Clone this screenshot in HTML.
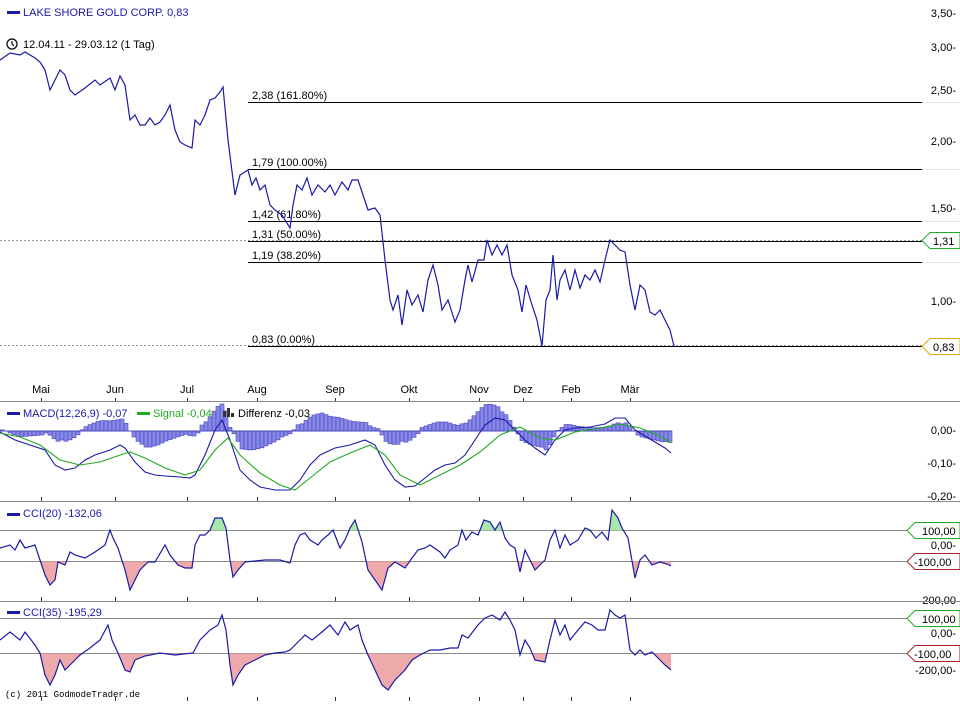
<!DOCTYPE html>
<html><head><meta charset="utf-8"><style>
body{margin:0;background:#fff;width:960px;height:701px;overflow:hidden;font-family:"Liberation Sans",sans-serif;}
svg text{font-family:"Liberation Sans",sans-serif;font-size:11px;fill:#000}
</style></head><body>
<svg id="s" width="960" height="701" viewBox="0 0 960 701" xmlns="http://www.w3.org/2000/svg">
<defs>
<clipPath id="c20b"><rect x="0" y="561.5" width="680" height="40"/></clipPath>
<clipPath id="c20t"><rect x="0" y="500" width="680" height="30.5"/></clipPath>
<clipPath id="c35b"><rect x="0" y="653.5" width="680" height="48"/></clipPath>
</defs>
<g stroke="#e4e4e4" stroke-width="1">
<line x1="922" y1="102.5" x2="960" y2="102.5"/><line x1="922" y1="169.5" x2="960" y2="169.5"/>
<line x1="922" y1="221.5" x2="960" y2="221.5"/><line x1="922" y1="262.5" x2="960" y2="262.5"/>
</g>
<g stroke="#000" stroke-width="1">
<line x1="248" y1="102.5" x2="922" y2="102.5"/>
<line x1="248" y1="169.5" x2="922" y2="169.5"/>
<line x1="248" y1="221.5" x2="922" y2="221.5"/>
<line x1="248" y1="241.5" x2="922" y2="241.5"/>
<line x1="248" y1="262.5" x2="922" y2="262.5"/>
<line x1="248" y1="346.5" x2="922" y2="346.5"/>
</g>
<g stroke="#999" stroke-width="1" stroke-dasharray="2,2">
<line x1="0" y1="240.5" x2="922" y2="240.5"/>
<line x1="0" y1="345.5" x2="922" y2="345.5"/>
</g>
<g font-size="11">
<text x="252" y="99">2,38 (161.80%)</text>
<text x="252" y="166">1,79 (100.00%)</text>
<text x="252" y="218">1,42 (61.80%)</text>
<text x="252" y="238">1,31 (50.00%)</text>
<text x="252" y="259">1,19 (38.20%)</text>
<text x="252" y="343">0,83 (0.00%)</text>
</g>
<g text-anchor="end">
<text x="956" y="17">3,50-</text><text x="956" y="51">3,00-</text><text x="956" y="94">2,50-</text>
<text x="956" y="145">2,00-</text><text x="956" y="212">1,50-</text><text x="956" y="305">1,00-</text>
<text x="956" y="434">0,00-</text><text x="956" y="467">-0,10-</text><text x="956" y="500">-0,20-</text>
<text x="956" y="549">0,00-</text><text x="956" y="604">200,00</text>
<text x="956" y="637">0,00-</text><text x="956" y="674">-200,00-</text>
</g>
<g stroke-width="1" fill="#fff">
<path d="M922,240.5 L930,232.5 H960 V248.5 H930 Z" stroke="#22aa22"/>
<path d="M922,346.5 L930,338.5 H960 V354.5 H930 Z" stroke="#e0a800"/>
<path d="M907,530.5 L915,522.5 H960 V538.5 H915 Z" stroke="#22aa22"/>
<path d="M907,561.5 L915,553.5 H960 V569.5 H915 Z" stroke="#aa2222"/>
<path d="M907,618.5 L915,610.5 H960 V626.5 H915 Z" stroke="#22aa22"/>
<path d="M907,653.5 L915,645.5 H960 V661.5 H915 Z" stroke="#aa2222"/>
</g>
<g>
<text x="933" y="245">1,31</text><text x="933" y="351">0,83</text>
<text x="922" y="535">100,00</text><text x="914" y="566">-100,00</text>
<text x="922" y="623">100,00</text><text x="914" y="658">-100,00</text>
</g>
<rect x="7" y="11" width="13" height="3" fill="#1a1aa8"/>
<text x="23" y="16" style="fill:#1a1aa8">LAKE SHORE GOLD CORP. 0,83</text>
<circle cx="12" cy="44" r="5" fill="none" stroke="#000" stroke-width="1.2"/>
<path d="M12,41 V44 L14,46" fill="none" stroke="#000" stroke-width="1.1"/>
<text x="23" y="48">12.04.11 - 29.03.12 (1 Tag)</text>
<polyline fill="none" stroke="#1a1aa8" stroke-width="1.2" points="0,60 10,53 20,55 25,52 35,58 40,62 45,70 50,90 55,80 60,70 65,75 70,90 75,95 85,88 95,80 100,85 110,78 115,90 120,76 125,85 130,120 135,115 140,125 145,125 150,118 155,125 160,122 165,115 170,105 175,130 180,142 185,145 192,148 195,120 200,125 205,115 210,100 215,98 220,92 223,87 228,140 235,195 240,175 248,170 252,185 256,178 260,190 265,185 270,205 275,210 282,215 285,220 290,228 293,205 297,185 302,190 307,178 312,195 318,185 325,192 330,185 335,195 342,182 348,190 352,180 358,180 362,192 368,210 375,208 380,215 385,260 390,300 393,310 398,295 402,325 407,290 412,305 418,295 423,312 428,280 433,265 438,285 442,310 448,300 455,322 460,310 465,280 468,265 472,282 478,260 484,260 487,240 492,255 497,245 502,255 507,245 512,275 518,290 522,312 526,285 532,305 537,320 542,346 546,300 550,290 553,255 557,300 560,280 565,270 570,290 575,270 580,288 585,275 590,280 595,270 600,282 605,260 610,240 615,245 620,250 625,252 630,285 635,310 640,285 645,290 650,312 655,315 660,310 665,320 670,330 674,346"/>
<g text-anchor="middle">
<text x="41" y="393">Mai</text><text x="115" y="393">Jun</text><text x="187" y="393">Jul</text><text x="257" y="393">Aug</text>
<text x="335" y="393">Sep</text><text x="409" y="393">Okt</text><text x="479" y="393">Nov</text><text x="523" y="393">Dez</text>
<text x="571" y="393">Feb</text><text x="630" y="393">Mär</text>
</g>
<g stroke="#888" stroke-width="1">
<line x1="0" y1="401.5" x2="960" y2="401.5"/>
<line x1="0" y1="501.5" x2="960" y2="501.5"/>
<line x1="0" y1="601.5" x2="960" y2="601.5"/>
<line x1="0" y1="530.5" x2="907" y2="530.5"/>
<line x1="0" y1="561.5" x2="907" y2="561.5"/>
<line x1="0" y1="618.5" x2="907" y2="618.5"/>
<line x1="0" y1="653.5" x2="907" y2="653.5"/>
</g>
<g id="ticks" stroke="#333" stroke-width="1"></g>
<g id="hist"></g>
<polyline id="macd" fill="none" stroke="#1a1aa8" stroke-width="1.1" points="0,432 15,440 30,445 45,450 55,465 65,470 75,468 85,460 95,455 110,450 120,445 125,448 135,462 145,472 155,475 165,476 180,477 190,478 195,475 205,455 215,430 222,420 230,440 240,470 250,480 260,487 275,490 290,490 300,480 310,465 320,455 335,448 350,445 365,440 375,445 385,465 395,480 405,487 415,486 425,478 435,470 445,465 455,463 465,455 475,440 485,425 495,418 505,420 515,430 525,440 535,448 545,455 555,440 565,430 575,428 590,427 605,424 615,418 625,418 635,430 645,436 655,442 665,448 671,453"/>
<polyline id="sig" fill="none" stroke="#22aa22" stroke-width="1.1" points="0,433 20,437 40,445 60,460 80,465 100,462 120,455 130,452 145,458 165,468 185,475 200,470 215,450 228,438 240,455 260,473 280,485 295,490 310,478 330,462 350,453 370,445 385,455 400,475 420,485 440,475 460,465 480,452 500,435 520,427 540,438 555,440 575,432 600,428 620,424 640,428 660,436 671,443"/>
<rect x="7" y="412" width="13" height="3" fill="#1a1aa8"/>
<text x="23" y="417" style="fill:#1a1aa8">MACD(12,26,9) -0,07</text>
<rect x="137" y="412" width="13" height="3" fill="#22aa22"/>
<text x="153" y="417" style="fill:#22aa22">Signal -0,04</text>
<path d="M223,417V411H226V417M227,417V408H230V417M231,417V413H234V417" fill="#333"/>
<text x="238" y="417">Differenz -0,03</text>
<g id="c20"></g>
<rect x="7" y="513" width="13" height="3" fill="#1a1aa8"/>
<text x="23" y="517" style="fill:#1a1aa8">CCI(20) -132,06</text>
<g id="c35"></g>
<rect x="7" y="611" width="13" height="3" fill="#1a1aa8"/>
<text x="23" y="616" style="fill:#1a1aa8">CCI(35) -195,29</text>
<text x="5" y="697" style="font-family:'Liberation Mono',monospace;font-size:9px">(c) 2011 GodmodeTrader.de</text>
</svg>
<script>
(function(){
var NS="http://www.w3.org/2000/svg";
function el(t,a,p){var e=document.createElementNS(NS,t);for(var k in a)e.setAttribute(k,a[k]);p.appendChild(e);return e;}
function pts(s){return s.trim().split(/\s+/).map(function(p){return p.split(',').map(Number);});}
function interp(P,x){for(var i=1;i<P.length;i++){if(x<=P[i][0]){var a=P[i-1],b=P[i];return a[1]+(b[1]-a[1])*(x-a[0])/(b[0]-a[0]);}}return P[P.length-1][1];}
var M=pts(document.getElementById('macd').getAttribute('points')),S=pts(document.getElementById('sig').getAttribute('points'));
var h=document.getElementById('hist');
for(var x=0;x<672;x+=4){var d=(interp(S,x)-interp(M,x))*1.2;var ty=Math.min(431,431-d),ht=Math.abs(d);if(ht<0.5)continue;
el('rect',{x:x,y:ty,width:4,height:ht,fill:'#8888e8',stroke:'#4444bb','stroke-width':0.6},h);}
el('line',{x1:0,y1:431,x2:672,y2:431,stroke:'#4444bb','stroke-width':1},h);
var t=document.getElementById('ticks');
[41,115,187,257,335,409,479,523,571,630].forEach(function(x){[[398,401],[497,501],[597,601],[697,701]].forEach(function(r){el('line',{x1:x+.5,y1:r[0],x2:x+.5,y2:r[1]},t);});});
function cci(g,P,ref){var line=P.map(function(p){return p.join(',')}).join(' ');
var g0=document.getElementById(g);
el('polygon',{points:line+' 671,'+ref.t+' 0,'+ref.t,fill:'#eeaaaa','clip-path':'url(#'+ref.cb+')'},g0);
if(ref.ct)el('polygon',{points:line+' 671,601 0,601',fill:'#aae8aa','clip-path':'url(#'+ref.ct+')'},g0);
el('polyline',{points:line,fill:'none',stroke:'#1a1aa8','stroke-width':1.2},g0);}
cci('c20',pts("0,548 10,545 15,550 20,540 25,548 35,545 40,560 45,575 50,585 55,580 58,562 65,565 70,552 75,555 85,558 95,552 105,545 110,530 113,538 118,548 125,570 130,590 135,580 140,570 148,562 155,562 165,545 170,555 178,565 185,568 192,568 195,545 200,535 205,535 210,530 215,518 222,518 226,528 230,560 233,577 238,570 245,562 255,561 265,560 280,560 290,563 295,545 300,535 305,533 310,540 318,545 322,540 328,535 333,530 340,548 345,540 350,528 355,520 362,542 368,570 375,580 382,590 388,568 395,562 405,568 412,558 418,550 425,548 430,545 440,552 445,558 450,550 458,545 462,530 466,540 472,532 478,535 484,520 490,522 495,530 500,522 505,538 510,545 515,548 520,572 525,550 530,560 535,570 545,560 550,540 555,530 560,548 565,535 570,545 578,540 585,528 590,530 596,538 602,532 608,540 612,510 618,518 622,528 628,538 635,578 640,560 645,555 652,565 660,562 667,564 671,566"),{t:500,cb:'c20b',ct:'c20t'});
cci('c35',pts("0,640 10,632 20,640 25,632 35,645 40,653 45,675 50,685 55,675 60,660 65,670 70,665 80,655 90,648 100,640 108,625 112,640 118,653 125,670 130,672 135,660 145,656 160,653 175,655 193,653 200,640 210,630 218,625 222,615 226,630 230,665 233,685 238,675 245,665 255,660 265,655 275,653 285,652 290,650 300,640 305,635 312,640 322,632 330,625 338,635 345,622 350,630 358,625 362,640 368,655 375,670 382,685 388,690 395,680 405,670 412,660 420,655 430,650 440,650 450,648 458,648 462,635 468,638 478,625 485,618 492,615 500,620 505,612 510,620 515,630 520,655 525,640 530,648 535,660 545,662 550,640 555,620 560,635 565,625 570,640 578,630 585,622 592,625 598,630 605,630 610,610 615,615 620,618 625,615 630,650 635,655 640,650 645,655 652,652 660,660 665,665 671,670"),{t:602,cb:'c35b'});
})();
</script>
</body></html>
